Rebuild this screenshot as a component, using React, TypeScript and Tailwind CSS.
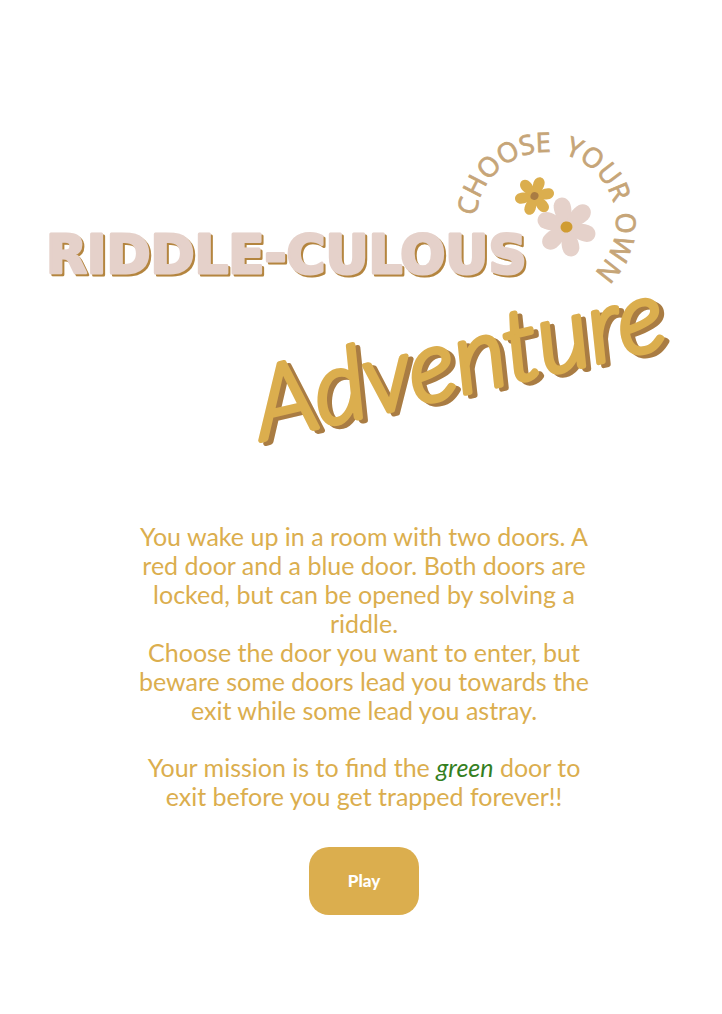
const petals = [0, 60, 120, 180, 240, 300];

function Logo() {
  return (
    <svg
      viewBox="40 120 640 340"
      className="w-full max-w-[640px]"
      role="img"
      aria-label="Riddle-culous Adventure, choose your own"
    >
      <defs>
        <path id="ring" d="M475 222a70 70 0 1 1 140 0a70 70 0 1 1 -140 0" />
      </defs>

      <g
        fill="#c6a578"
        stroke="#c6a578"
        strokeWidth="0.8"
        className="font-['Open_Sans',sans-serif] text-[27px] font-medium"
      >
        <text>
          <textPath href="#ring" startOffset="6">CHOOSE</textPath>
        </text>
        <text>
          <textPath href="#ring" startOffset="128">YOUR</textPath>
        </text>
        <text>
          <textPath href="#ring" startOffset="210">OWN</textPath>
        </text>
      </g>

      <g transform="translate(533.5 196) rotate(20)" fill="#dbae4e">
        {petals.map((a) => (
          <path
            key={a}
            transform={`rotate(${a})`}
            d="M-2 0C-4.500 -6 -6.500 -11 -5 -16C-3 -21 3 -21 5 -16C6.500 -11 4.500 -6 2 0Z"
          />
        ))}
        <circle r="4" fill="#a97c43" />
      </g>
      <g transform="translate(565.500 227) rotate(-12)" fill="#e5d1ca">
        {petals.map((a) => (
          <path
            key={a}
            transform={`rotate(${a})`}
            d="M-3 0C-7 -9 -10 -17 -8 -24C-5 -32 5 -32 8 -24C10 -17 7 -9 3 0Z"
          />
        ))}
        <ellipse rx="6" ry="5.500" fill="#d09c32" />
      </g>

      <text
        x="45"
        y="273"
        fill="#e5d1ca"
        stroke="#e5d1ca"
        strokeWidth="3"
        strokeLinejoin="round"
        className="font-['DejaVu_Sans',sans-serif] text-[53px] font-bold drop-shadow-[2px_2px_0_#b4853f]"
      >
        RIDDLE-CULOUS
      </text>

      <g className="drop-shadow-[5px_3px_0_#a97c43]">
        <text
          transform="translate(262 440) rotate(-13)"
          fill="#dbae4e"
          stroke="#dbae4e"
          strokeWidth="5"
          strokeLinejoin="round"
          className="font-['Lato',sans-serif] text-[100px] font-light italic"
        >
          Adventure
        </text>
      </g>
    </svg>
  );
}

export default function App() {
  return (
    <main className="flex min-h-screen flex-col items-center bg-white px-10 pt-[120px] pb-[99px] font-['Lato',sans-serif] text-[#dbae4e]">
      <h1 className="flex w-full justify-center">
        <Logo />
      </h1>
      <div className="mt-[62px] ml-1.5 flex w-full max-w-[472px] flex-col items-center">
        <div className="text-center text-[25px] leading-[29px]">
          <p>
            You wake up in a room with two doors. A red door and a blue door. Both doors are
            locked, but can be opened by solving a riddle.
          </p>
          <p>
            Choose the door you want to enter, but beware some doors lead you towards the exit
            while some lead you astray.
          </p>
          <p className="mt-7">
            Your mission is to find the <em className="text-[#357f1f]">green</em> door to exit
            before you get trapped forever!!
          </p>
        </div>
        <button
          type="button"
          className="mt-9 rounded-[20px] bg-[#dbae4e] px-[39px] py-[22px] text-[17px] leading-6 font-black text-white"
        >
          Play
        </button>
      </div>
    </main>
  );
}
